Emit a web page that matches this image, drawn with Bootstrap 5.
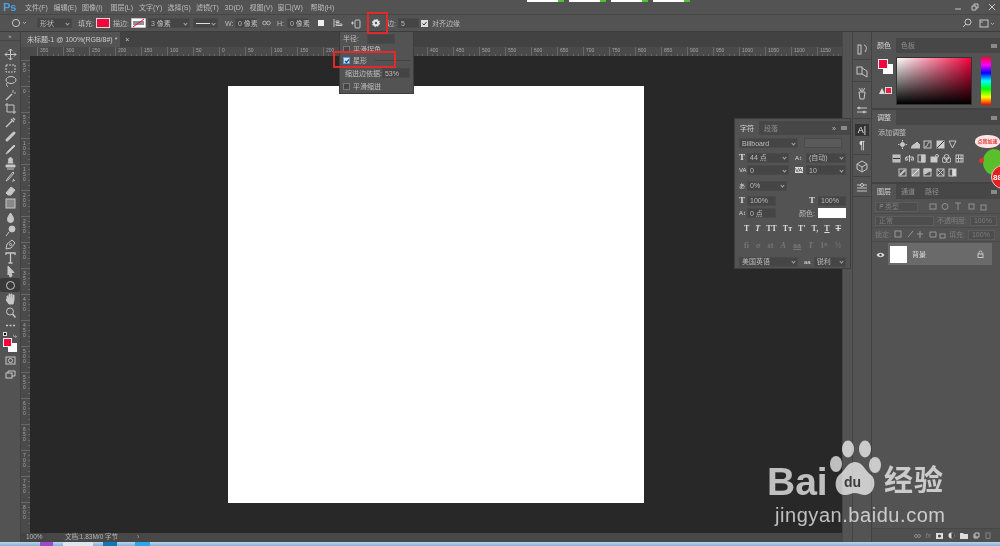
<!DOCTYPE html>
<html lang="zh">
<head>
<meta charset="UTF-8">
<title>Photoshop</title>
<link rel="stylesheet" href="https://cdn.jsdelivr.net/npm/bootstrap@5.3.0/dist/css/bootstrap.min.css">
<style>
  html, body { margin: 0; background: #535353; overflow: hidden; }
  .ps-app { width: 1000px; height: 546px; background: #535353; color: #bdbdbd; font: 7px/1 "Liberation Sans", "Noto Sans CJK SC", sans-serif; filter: blur(.35px); }
  .ps-app svg { display: block; flex: none; }
  .ic { fill: none; stroke: #c6c6c6; stroke-width: 1; }
  .fic { fill: #c6c6c6; }
  .menu-row { flex: 0 0 15px; border-bottom: 1px solid #474747; }
  .ps-logo { flex: 0 0 25px; padding-left: 3px; color: #4d9fe0; font-weight: 700; font-size: 11px; }
  .menu-item { flex: 0 0 28.5px; white-space: nowrap; }
  .menu-3d { flex-basis: 25px; }
  .menu-view { flex-basis: 28px; }
  .menu-win { flex-basis: 33px; }
  .menu-help { flex-basis: 30px; }
  .update-strip { margin-left: 186px; gap: 5px; }
  .update-bit { width: 37px; height: 2px; background: linear-gradient(90deg, #fff 85%, #4cc62e 85%); }
  .win-btns { width: 50px; }
  .opts-row { flex: 0 0 17px; border-bottom: 1px solid #3d3d3d; padding-left: 10px; }
  .opt-box { flex: none; height: 10px; background: #454545; border: 1px solid #4a4a4a; display: flex; align-items: center; padding: 0 2px; white-space: nowrap; }
  .opt-arrow::after { content: ""; margin-left: auto; width: 3px; height: 3px; border-right: 1px solid #aaa; border-bottom: 1px solid #aaa; transform: rotate(45deg); }
  .opt-label { flex: none; white-space: nowrap; }
  .red-swatch { height: 10px; background: #f5033c; border: 1px solid #ddd; flex: none; }
  .line-sample { width: 14px; height: 1px; background: #ddd; }
  .wd-5 { width: 5px; } .wd-6 { width: 6px; } .wd-8 { width: 8px; } .wd-9 { width: 9px; } .wd-14 { width: 14px; } .wd-16 { width: 16px; }
  .wd-21 { width: 21px; } .wd-22 { width: 22px; } .wd-25 { width: 25px; } .wd-27 { width: 27px; } .wd-28 { width: 28px; } .wd-29 { width: 29px; }
  .wd-32 { width: 32px; } .wd-35 { width: 35px; } .wd-37 { width: 37px; } .wd-38 { width: 38px; } .wd-40 { width: 40px; } .wd-42 { width: 42px; }
  .wd-43 { width: 43px; } .wd-59 { width: 59px; } .wd-53 { width: 53px; }
  .gl-2 { margin-left: 2px; } .gl-3 { margin-left: 3px; } .gl-4 { margin-left: 4px; } .gl-5 { margin-left: 5px; } .gl-6 { margin-left: 6px; }
  .gl-7 { margin-left: 7px; } .gl-8 { margin-left: 8px; } .gl-9 { margin-left: 9px; } .gl-10 { margin-left: 10px; }
  .tool-col { width: 21px; border-right: 1px solid #414141; }
  .collapse-mark { height: 9px; border-bottom: 1px solid #454545; color: #bbb; font-size: 6px; }
  .tool-gap { height: 7px; }
  .tool-btn { height: 13.55px; }
  .tool-on { background: #393939; border-radius: 2px; }
  .swatch-area { height: 50px; }
  .mini-default { left: 3px; top: 0; width: 4px; height: 4px; background: #111; border: 1px solid #ddd; }
  .mini-switch { left: 13px; top: 0; color: #ddd; }
  .tool-bg { left: 8px; top: 11px; width: 9px; height: 9px; background: #fff; }
  .tool-fg { left: 3px; top: 6px; width: 9px; height: 9px; background: #f5033c; border: 1px solid #eee; }
  .tool-mask { left: 5px; top: 24px; }
  .tool-screen { left: 5px; top: 38px; }
  .center-col { width: 821px; }
  .tab-bar { flex: 0 0 15px; background: #424242; }
  .doc-tab { width: 99px; background: #535353; padding-left: 6px; color: #ccc; white-space: nowrap; }
  .ruler-x { flex: 0 0 9px; background: #4a4a4a; font-size: 5px; color: #a5a5a5; overflow: hidden; }
  .ruler-x > div { flex: 0 0 26px; height: 9px; padding: 1px 0 0 2px; border-left: 1px solid #686868; background: repeating-linear-gradient(90deg, transparent 0 4.2px, #666 4.2px 5.2px) 0 7px / 100% 2px no-repeat; }
  .ruler-x > .ruler-pad { flex-basis: 16px; border: 0; background: none; }
  .ruler-y { width: 9px; background: #4a4a4a; font-size: 5px; color: #a5a5a5; overflow: hidden; }
  .ruler-y > div { flex: 0 0 26px; width: 9px; padding: 2px 4px 0 2px; border-top: 1px solid #686868; line-height: 5px; word-break: break-all; background: repeating-linear-gradient(180deg, transparent 0 4.2px, #666 4.2px 5.2px) 7px 0 / 2px 100% no-repeat; }
  .ruler-y > .ruler-pad { flex-basis: 4px; border: 0; background: none; padding: 0; }
  .canvas-wrap { background: #282828; }
  .doc-page { width: 416px; height: 417px; background: #fff; }
  .status-row { flex: 0 0 9px; background: #474747; font-size: 6.500px; color: #b5b5b5; white-space: nowrap; }
  .zoom-cell { flex: 0 0 25px; padding-left: 5px; background: #444; height: 100%; display: flex; align-items: center; }
  .doc-size { margin-left: 19px; width: 72px; }
  .dock-gutter { width: 10px; border-left: 1px solid #474747; }
  .icon-strip { width: 20px; border-left: 1px solid #424242; border-right: 1px solid #424242; }
  .strip-top { height: 6px; }
  .strip-group { border-bottom: 1px solid #424242; padding: 5px 0 3px; gap: 5px; }
  .strip-a { width: 14px; height: 12px; background: #333; color: #eee; font-size: 9px; }
  .strip-p { font-size: 10px; color: #ddd; font-weight: 700; }
  .panel-col { width: 128px; }
  .panel-top { height: 6px; }
  .panel-tabs { flex: 0 0 15px; background: #474747; }
  .panel-tab { padding: 0 5px; height: 100%; display: flex; align-items: center; color: #8f8f8f; }
  .panel-tab-on { background: #535353; color: #d6d6d6; }
  .tab-menu { width: 6px; height: 4px; background: #8a8a8a; margin: 0 3px 0 auto; }
  .tab-menu-char { margin: 0 3px 0 5px; }
  .color-body { flex: 0 0 57px; border-bottom: 2px solid #424242; }
  .swatch-fg { left: 6px; top: 6px; width: 10px; height: 10px; background: #f5033c; border: 1px solid #eee; z-index: 1; }
  .swatch-bg { left: 11px; top: 11px; width: 10px; height: 10px; background: #fff; }
  .swatch-web { left: 13px; top: 34px; width: 7px; height: 7px; background: #ef1c43; border: 1px solid #ddd; }
  .warn-tri { left: 7px; top: 35px; width: 0; height: 0; border-left: 3px solid transparent; border-right: 3px solid transparent; border-bottom: 6px solid #ddd; }
  .sv-box { left: 24px; top: 4px; width: 76px; height: 48px; background: linear-gradient(to top, #000, transparent), linear-gradient(to right, #fff, #f5033c); border: 1px solid #333; }
  .hue-box { left: 109px; top: 4px; width: 10px; height: 48px; background: linear-gradient(#f03, #f0f, #00f, #0ff, #0f0, #ff0, #f00); }
  .adj-body { flex: 0 0 59px; border-bottom: 2px solid #424242; padding: 3px 0 0 6px; overflow: hidden; }
  .adj-title { height: 9px; padding-top: 1px; }
  .adj-row { gap: 3.500px; height: 14px; padding-left: 20px; }
  .adj-row2 { padding-left: 14px; }
  .layer-lines { padding-top: 1px; }
  .layer-line { height: 14px; padding: 0 3px; gap: 3px; color: #7e7e7e; white-space: nowrap; border-bottom: 1px solid #4b4b4b; }
  .dim-box { flex: none; height: 10px; background: #4d4d4d; border: 1px solid #5c5c5c; display: flex; align-items: center; padding: 0 3px; }
  .layers-fill { border-bottom: 1px solid #474747; position: relative; padding-top: 1px; }
  .layer-item { height: 22px; margin: 0 8px 0 16px; background: #6a6a6a; color: #ddd; gap: 5px; padding-left: 2px; }
  .layer-thumb { width: 17px; height: 17px; background: #fff; }
  .layer-eye { left: 4px; top: 10px; }
  .layers-foot { flex: 0 0 13px; gap: 5px; padding-right: 9px; background: #4f4f4f; }
  .fx-mark { color: #888; font-style: italic; }
  .task-bar { flex: 0 0 4px; background: linear-gradient(#bcd6ee, #88aed2); padding-left: 40px; }
  .task-chip { height: 4px; }
  .chip-purple { width: 13px; background: #9b4bc9; }
  .chip-white { width: 30px; margin-left: 10px; background: #dfe7ee; }
  .chip-blue { width: 14px; margin-left: 10px; background: #0f78b5; }
  .chip-sky { width: 15px; margin-left: 18px; background: #2aa8e8; }
  .float-panel { left: 734px; top: 118px; width: 117px; height: 151px; background: #535353; border: 1px solid #3e3e3e; z-index: 5; }
  .char-tabs { flex: 0 0 14px; background: #474747; margin-top: 2px; }
  .char-row { flex: 0 0 12.500px; padding: 0 4px; gap: 3px; }
  .char-box { flex: none; height: 10px; background: #454545; border: 1px solid #4a4a4a; display: flex; align-items: center; padding: 0 2px; white-space: nowrap; }
  .box-off { background: #5a5a5a; }
  .box-white { height: 10px; background: #fff; }
  .box-web { background: #444; }
  .glyph-t { font: 700 9px/1 "Liberation Serif", serif; color: #ddd; }
  .glyph-s { font-size: 6px; color: #ddd; white-space: nowrap; }
  .glyph-inv { background: #ddd; color: #333; }
  .style-row { flex: 0 0 14px; padding: 0 9px; font-family: "Liberation Serif", serif; font-weight: 700; font-size: 8px; color: #ddd; }
  .style-dim { color: #777; }
  .row-top2 { margin-top: 2px; }
  .row-top25 { margin-top: 2.500px; }
  .row-top3 { margin-top: 3px; }
  .drop-popup { left: 339px; top: 31px; width: 75px; height: 63px; background: #535353; border: 1px solid #3c3c3c; z-index: 6; padding: 1px 3px; }
  .pop-line { flex: 0 0 11px; gap: 3px; white-space: nowrap; }
  .pop-line-mid { flex-basis: 14px; gap: 0; padding-left: 2px; }
  .pop-line-tall { flex-basis: 13px; }
  .pop-check { flex: none; width: 7px; height: 7px; background: #454545; border: 1px solid #777; }
  .pop-on { background: #cfe1f5; border-color: #5b9ddb; }
  .pop-rule { height: 1px; background: #444; }
  .red-frame { border: 2px solid #e32a2a; z-index: 8; }
  .frame-gear { left: 367px; top: 12px; width: 21px; height: 22px; }
  .frame-star { left: 333px; top: 51px; width: 63px; height: 17px; }
  .promo { left: 972px; top: 134px; width: 28px; height: 58px; z-index: 7; overflow: hidden; }
  .promo-bubble { left: 3px; top: 1px; width: 25px; height: 13px; background: #fde6e6; color: #e23a3a; border-radius: 45%; font-size: 5px; font-weight: 700; white-space: nowrap; }
  .promo-blob { left: 11px; top: 15px; width: 22px; height: 26px; background: #59c02b; border-radius: 50%; }
  .promo-dot { left: 7px; top: 24px; width: 5px; height: 5px; background: #e53232; border-radius: 50%; }
  .promo-badge { left: 19px; top: 31px; width: 24px; height: 24px; background: #e2201f; border: 1px solid #f3c9c9; border-radius: 50%; color: #fff; font-size: 8px; font-weight: 700; padding: 8px 0 0 1px; }
  .mark-wrap { left: 760px; top: 438px; width: 200px; height: 90px; z-index: 9; color: rgba(255,255,255,.7); pointer-events: none; }
  .mark-bai { left: 7px; top: 24px; font: 700 39px/1 "Liberation Sans", sans-serif; }
  .mark-paw { left: 68px; top: 2px; }
  .mark-paw g { fill: rgba(255,255,255,.7); }
  .mark-cn { left: 124px; top: 26px; font: 700 29px/1 "Noto Sans CJK SC", sans-serif; letter-spacing: 1px; white-space: nowrap; }
  .mark-url { left: 15px; top: 67px; font: 400 20px/1 "Liberation Sans", sans-serif; letter-spacing: .55px; white-space: nowrap; }
  .mark-du { font: 700 14px/1 "Liberation Sans", sans-serif; fill: #3c3c3c; }
</style>
</head>
<body>
<div class="ps-app d-flex flex-column position-relative overflow-hidden">

  <div class="menu-row d-flex align-items-center">
    <div class="ps-logo">Ps</div>
    <div class="menu-item">文件(F)</div><div class="menu-item">编辑(E)</div><div class="menu-item">图像(I)</div><div class="menu-item">图层(L)</div><div class="menu-item">文字(Y)</div><div class="menu-item">选择(S)</div><div class="menu-item">滤镜(T)</div><div class="menu-item menu-3d">3D(D)</div><div class="menu-item menu-view">视图(V)</div><div class="menu-item menu-win">窗口(W)</div><div class="menu-item menu-help">帮助(H)</div>
    <div class="update-strip d-flex align-self-start">
      <div class="update-bit"></div><div class="update-bit"></div><div class="update-bit"></div><div class="update-bit"></div>
    </div>
    <div class="win-btns d-flex align-items-center justify-content-around ms-auto">
      <svg width="8" height="8" class="ic"><path d="M1 6h6"/></svg>
      <svg width="8" height="8" class="ic"><path d="M1 3h4v4H1zM3 3V1h4v4H5"/></svg>
      <svg width="8" height="8" class="ic"><path d="M1 1l6 6M7 1L1 7"/></svg>
    </div>
  </div>

  <div class="opts-row d-flex align-items-center">
    <svg width="17" height="10" class="ic"><circle cx="6" cy="5" r="3.600"/><path d="M13 4l1.500 1.500L16 4" stroke-width=".8"/></svg>
    <div class="opt-box opt-arrow wd-35 gl-10">形状</div>
    <span class="opt-label wd-16 gl-6">填充:</span>
    <div class="red-swatch wd-14 gl-2"></div>
    <span class="opt-label wd-16 gl-3">描边:</span>
    <svg width="15" height="10" class="gl-2"><rect width="15" height="10" fill="#fff" stroke="#888"/><path d="M2 6h11M2 4h11" stroke="#222"/><path d="M2 9L13 1" stroke="#f5033c"/></svg>
    <div class="opt-box opt-arrow wd-42 gl-2">3 像素</div>
    <div class="opt-box opt-arrow wd-25 gl-3"><span class="line-sample"></span></div>
    <span class="opt-label wd-8 gl-7">W:</span>
    <div class="opt-box wd-22 gl-2">0 像素</div>
    <svg class="ic gl-5" width="9" height="6"><circle cx="2.500" cy="3" r="1.800" stroke-width=".8"/><circle cx="6.500" cy="3" r="1.800" stroke-width=".8"/></svg>
    <span class="opt-label wd-8 gl-6">H:</span>
    <div class="opt-box wd-21 gl-2">0 像素</div>
    <svg width="10" height="10" class="gl-8"><rect x="2" y="2" width="6" height="6" fill="#eee"/></svg>
    <svg width="10" height="10" class="ic gl-7"><path d="M1 1v8M3 3h3v1.500H3zM3 6h6v1.500H3z"/></svg>
    <svg width="12" height="11" class="ic gl-7"><path d="M1 5h3M2.500 3.500v3"/><rect x="5" y="2" width="5" height="8" rx="1"/></svg>
    <svg width="10" height="10" viewBox="0 0 10 10" class="gl-9"><circle cx="5" cy="5" r="3.200" fill="#e4e4e4" stroke="#e4e4e4" stroke-dasharray="1.500 1" stroke-width="1.500"/><circle cx="5" cy="5" r="1.200" fill="#535353"/></svg>
    <span class="opt-label wd-9 gl-6">边:</span>
    <div class="opt-box wd-21 gl-2">5</div>
    <svg width="7" height="7" class="gl-2"><rect width="7" height="7" fill="#ddd"/><path d="M1.500 3.500l1.500 1.500 2.500-3" fill="none" stroke="#333"/></svg>
    <span class="opt-label gl-4">对齐边缘</span>
    <svg width="10" height="10" class="ic ms-auto"><circle cx="6" cy="4" r="3"/><path d="M4 6L1 9"/></svg>
    <svg width="17" height="10" class="ic gl-7 me-1"><rect x="1" y="2" width="8" height="7"/><path d="M1 4h3M12 5l1.500 1.500L15 5" stroke-width=".8"/></svg>
  </div>

  <div class="d-flex flex-grow-1 overflow-hidden">
    <div class="tool-col d-flex flex-column align-items-stretch">
      <div class="collapse-mark d-flex align-items-center justify-content-center">»</div>
      <div class="tool-gap"></div>
      <div id="toolList" class="d-flex flex-column"></div>
      <div class="swatch-area position-relative">
        <div class="mini-default position-absolute"></div>
        <div class="mini-switch position-absolute">⤷</div>
        <div class="tool-bg position-absolute"></div>
        <div class="tool-fg position-absolute"></div>
        <svg class="ic tool-mask position-absolute" width="11" height="9"><rect x="1" y="1" width="9" height="7"/><circle cx="5.500" cy="4.500" r="2"/></svg>
        <svg class="ic tool-screen position-absolute" width="11" height="9"><rect x="1" y="3" width="6" height="5"/><path d="M3 3V1h7v5H7"/></svg>
      </div>
    </div>

    <div class="center-col d-flex flex-column flex-grow-1">
      <div class="tab-bar d-flex">
        <div class="doc-tab d-flex align-items-center">未标题-1 @ 100%(RGB/8#) *<span class="ms-2">×</span></div>
      </div>
      <div id="rulerX" class="ruler-x d-flex"><div class="ruler-pad"></div></div>
      <div class="d-flex flex-grow-1 overflow-hidden">
        <div id="rulerY" class="ruler-y d-flex flex-column"><div class="ruler-pad"></div></div>
        <div class="canvas-wrap flex-grow-1 d-flex align-items-center justify-content-center">
          <div class="doc-page"></div>
        </div>
      </div>
      <div class="status-row d-flex align-items-center">
        <div class="zoom-cell">100%</div>
        <div class="doc-size">文档:1.83M/0 字节</div>
        <div>›</div>
      </div>
    </div>

    <div class="dock-gutter"></div>
    <div class="icon-strip d-flex flex-column">
      <div class="strip-top"></div>
      <div class="strip-group d-flex flex-column align-items-center">
        <svg width="12" height="13" class="ic"><rect x="2" y="2" width="3" height="9"/><path d="M8 2c3 1 3 4 1 7"/></svg>
      </div>
      <div class="strip-group d-flex flex-column align-items-center">
        <svg width="12" height="13" class="ic"><rect x="1" y="2" width="5" height="7"/><path d="M6 3l5 3v6l-5-3"/></svg>
      </div>
      <div class="strip-group d-flex flex-column align-items-center">
        <svg width="12" height="13" class="ic"><path d="M3 5h6l-1 7H4zM6 1v4M3 1l2 3M9 1L7 4"/></svg>
        <svg width="12" height="10" class="ic"><path d="M1 3h10M1 7h10"/><circle cx="3" cy="3" r="1"/><circle cx="8" cy="7" r="1"/></svg>
      </div>
      <div class="strip-group d-flex flex-column align-items-center">
        <div class="strip-a d-flex align-items-center justify-content-center">A|</div>
        <div class="strip-p">¶</div>
      </div>
      <div class="strip-group d-flex flex-column align-items-center">
        <svg width="12" height="13" class="ic"><path d="M6 1l5 3v5l-5 3-5-3V4zM1 4l5 3 5-3M6 7v5"/></svg>
      </div>
      <div class="strip-group d-flex flex-column align-items-center">
        <svg width="12" height="11" class="ic"><path d="M1 3h4M7 3h4M1 6h10M1 9h10"/><circle cx="6" cy="3" r="1.500"/></svg>
      </div>
    </div>

    <div class="panel-col d-flex flex-column">
      <div class="panel-top"></div>
      <div class="panel-tabs d-flex align-items-center">
        <div class="panel-tab panel-tab-on">颜色</div><div class="panel-tab">色板</div><div class="tab-menu"></div>
      </div>
      <div class="color-body position-relative">
        <div class="swatch-fg position-absolute"></div><div class="swatch-bg position-absolute"></div>
        <div class="warn-tri position-absolute"></div><div class="swatch-web position-absolute"></div>
        <div class="sv-box position-absolute"></div><div class="hue-box position-absolute"></div>
      </div>
      <div class="panel-tabs d-flex align-items-center">
        <div class="panel-tab panel-tab-on">调整</div><div class="tab-menu"></div>
      </div>
      <div class="adj-body">
        <div class="adj-title">添加调整</div>
        <div id="adjRow1" class="adj-row d-flex align-items-center"></div>
        <div id="adjRow2" class="adj-row adj-row2 d-flex align-items-center"></div>
        <div id="adjRow3" class="adj-row d-flex align-items-center"></div>
      </div>
      <div class="panel-tabs d-flex align-items-center">
        <div class="panel-tab panel-tab-on">图层</div><div class="panel-tab">通道</div><div class="panel-tab">路径</div><div class="tab-menu"></div>
      </div>
      <div class="layer-lines">
        <div class="layer-line d-flex align-items-center">
          <div class="dim-box wd-43">ᑭ 类型</div>
          <svg width="60" height="9" class="ic gl-8" opacity=".55"><rect x="1" y="2" width="6" height="5"/><circle cx="16" cy="4.500" r="3"/><path d="M26 1h6M29 1v7"/><rect x="40" y="2" width="5" height="5"/><rect x="52" y="3" width="5" height="5"/></svg>
        </div>
        <div class="layer-line d-flex align-items-center">
          <div class="dim-box wd-59">正常</div>
          <span>不透明度:</span><div class="dim-box wd-27">100%</div>
        </div>
        <div class="layer-line d-flex align-items-center">
          <span class="wd-16">锁定:</span>
          <svg width="52" height="9" class="ic" opacity=".6"><rect x="1" y="1" width="6" height="6"/><path d="M14 7l5-6M26 1v7M23 4h6M36 2h6v5h-6z"/><rect x="46" y="4" width="5" height="4"/></svg>
          <span>填充:</span><div class="dim-box wd-27">100%</div>
        </div>
      </div>
      <div class="layers-fill flex-grow-1">
        <svg class="layer-eye position-absolute" width="9" height="6" viewBox="0 0 9 6"><path d="M.5 3C3 0 6 0 8.500 3 6 6 3 6 .5 3z" fill="#ddd"/><circle cx="4.500" cy="3" r="1.200" fill="#444"/></svg>
        <div class="layer-item d-flex align-items-center">
          <div class="layer-thumb"></div><span>背景</span>
          <svg width="7" height="8" class="ic ms-auto me-2"><path d="M2 4V2.500a1.500 1.500 0 0 1 3 0V4"/><rect x="1" y="4" width="5" height="3.500"/></svg>
        </div>
      </div>
      <div class="layers-foot d-flex align-items-center justify-content-end">
        <svg width="7" height="6" class="ic" opacity=".5"><circle cx="2" cy="3" r="1.500"/><circle cx="5" cy="3" r="1.500"/></svg>
        <span class="fx-mark">fx</span>
        <svg width="7" height="6"><rect width="7" height="6" fill="#ddd"/><circle cx="3.500" cy="3" r="1.500" fill="#444"/></svg>
        <svg width="7" height="7"><circle cx="3.500" cy="3.500" r="3" fill="#ddd"/><path d="M3.500.5a3 3 0 0 1 0 6z" fill="#444"/></svg>
        <svg width="8" height="6"><path d="M0 0h3l1 1h4v5H0z" fill="#ddd"/></svg>
        <svg width="7" height="7" class="ic"><path d="M2 1h4v4H2zM1 2v4h4"/></svg>
        <svg width="6" height="7" class="ic" opacity=".45"><path d="M0 1h6M1 2v4.500h4V2"/></svg>
      </div>
    </div>
  </div>

  <div class="task-bar d-flex">
    <div class="task-chip chip-purple"></div>
    <div class="task-chip chip-white"></div>
    <div class="task-chip chip-blue"></div>
    <div class="task-chip chip-sky"></div>
  </div>

  <!-- floating stuff over the canvas -->
  <div class="float-panel position-absolute d-flex flex-column">
    <div class="char-tabs d-flex align-items-center">
      <div class="panel-tab panel-tab-on">字符</div><div class="panel-tab">段落</div>
      <span class="ms-auto">»</span><div class="tab-menu tab-menu-char"></div>
    </div>
    <div class="char-row row-top2 d-flex align-items-center">
      <div class="char-box opt-arrow wd-59">Billboard</div>
      <div class="char-box box-off wd-38 gl-3"></div>
    </div>
    <div class="char-row row-top2 d-flex align-items-center">
      <span class="glyph-t wd-5">T</span><div class="char-box opt-arrow wd-42">44 点</div>
      <span class="glyph-s wd-9 gl-3">A↕</span><div class="char-box opt-arrow wd-40">(自动)</div>
    </div>
    <div class="char-row d-flex align-items-center">
      <span class="glyph-s wd-5">VA</span><div class="char-box opt-arrow wd-42">0</div>
      <span class="glyph-s glyph-inv wd-9 gl-3">VA</span><div class="char-box opt-arrow wd-40">10</div>
    </div>
    <div class="char-row row-top3 d-flex align-items-center">
      <span class="glyph-s wd-5">あ</span><div class="char-box opt-arrow wd-40">0%</div>
    </div>
    <div class="char-row row-top25 d-flex align-items-center">
      <span class="glyph-t wd-5">T</span><div class="char-box wd-29">100%</div>
      <span class="glyph-t ms-auto">T</span><div class="char-box wd-28">100%</div>
    </div>
    <div class="char-row d-flex align-items-center">
      <span class="glyph-s wd-5">A↕</span><div class="char-box wd-29">0 点</div>
      <span class="ms-auto">颜色:</span><div class="box-white wd-28"></div>
    </div>
    <div class="style-row row-top2 d-flex justify-content-between align-items-center">
      <span>T</span><span><i>T</i></span><span>TT</span><span>Tт</span><span>T'</span><span>T,</span><span><u>T</u></span><span><s>T</s></span>
    </div>
    <div class="style-row style-dim row-top3 d-flex justify-content-between align-items-center">
      <span>fi</span><span><i>σ</i></span><span>st</span><span><i>A</i></span><span><u>aa</u></span><span><i>T</i></span><span>1ˢᵗ</span><span>½</span>
    </div>
    <div class="char-row d-flex align-items-center mt-auto">
      <div class="char-box opt-arrow wd-59">美国英语</div>
      <span class="glyph-s gl-3">aa</span>
      <div class="char-box opt-arrow wd-32">锐利</div>
    </div>
  </div>

  <div class="drop-popup position-absolute d-flex flex-column">
    <div class="pop-line d-flex align-items-center">半径:<div class="char-box wd-28 gl-5"></div></div>
    <div class="pop-line d-flex align-items-center"><div class="pop-check"></div><span>平滑拐角</span></div>
    <div class="pop-line d-flex align-items-center">
      <svg width="7" height="7" class="pop-check pop-on"><path d="M1 3l1.500 1.500L5 1.500" fill="none" stroke="#1d4f82" stroke-width="1.200"/></svg>
      <span>星形</span><div class="pop-rule flex-grow-1 gl-5"></div>
    </div>
    <div class="pop-line pop-line-mid d-flex align-items-center">缩进边依据:<div class="char-box box-web wd-28">53%</div></div>
    <div class="pop-line pop-line-tall d-flex align-items-center"><div class="pop-check"></div><span>平滑缩进</span></div>
  </div>

  <div class="red-frame frame-gear position-absolute"></div>
  <div class="red-frame frame-star position-absolute"></div>

  <div class="promo position-absolute">
    <div class="promo-bubble position-absolute d-flex align-items-center justify-content-center">点我加速</div>
    <div class="promo-blob position-absolute"></div>
    <div class="promo-dot position-absolute"></div>
    <div class="promo-badge position-absolute">88</div>
  </div>

  <div class="mark-wrap position-absolute">
    <div class="mark-bai position-absolute">Bai</div>
    <svg class="mark-paw position-absolute" width="54" height="60" viewBox="0 0 54 60">
      <g>
        <ellipse cx="8" cy="24" rx="6" ry="8"/>
        <ellipse cx="20" cy="9" rx="6" ry="8.500"/>
        <ellipse cx="37" cy="9" rx="6" ry="8.500"/>
        <ellipse cx="47" cy="25" rx="6" ry="8"/>
        <path d="M27 22c8 0 10 9 16 13 6 5 4 19-6 20-4 0-7-2-10-2s-6 2-10 2C7 55 5 41 11 35c6-4 8-13 16-13z"/>
      </g>
      <text x="16" y="47" class="mark-du">du</text>
    </svg>
    <div class="mark-cn position-absolute">经验</div>
    <div class="mark-url position-absolute">jingyan.baidu.com</div>
  </div>
</div>
<script src="https://cdn.jsdelivr.net/npm/bootstrap@5.3.0/dist/js/bootstrap.bundle.min.js"></script>
<script>
// rulers
var rx = document.getElementById("rulerX");
for (var k = -7; k <= 23; k++) {
  var c = document.createElement("div");
  c.textContent = Math.abs(k) * 50;
  rx.appendChild(c);
}
var ry = document.getElementById("rulerY");
for (var j = -1; j <= 16; j++) {
  var r = document.createElement("div");
  r.textContent = Math.abs(j) * 50;
  ry.appendChild(r);
}

// toolbar icons, rough shapes
var toolPaths = [
  '<path d="M6.500 1v11M1 6.500h11M6.500 1l-2 2M6.500 1l2 2M6.500 12l-2-2M6.500 12l2-2M1 6.500l2-2M1 6.500l2 2M12 6.500l-2-2M12 6.500l-2 2"/>',
  '<rect x="2" y="3" width="9" height="7" stroke-dasharray="2 1"/>',
  '<ellipse cx="7" cy="5" rx="5" ry="3.500"/><path d="M3 8c-1 2 0 3 1 4"/>',
  '<path d="M2 11l6-6" stroke-width="1.500"/><path d="M9 1v3M10 4h2" stroke-width=".8"/>',
  '<path d="M3 1v9h9M1 3h9v9"/>',
  '<path d="M2 11l6-6M7 3l3 3M9 2l2 2" stroke-width="1.400"/>',
  '<path d="M3 10l7-7" stroke-width="3" stroke-linecap="round"/>',
  '<path class="fic" d="M2 11l2-3 6-6 1 1-6 6z"/>',
  '<path class="fic" d="M4 6h5l-1-2a2 2 0 1 0-3 0zM2 8h9v2H2zM3 12h7"/>',
  '<path d="M2 11l2-3 5-6 1 1-5 6zM9 9l2 2M8 11l2 0"/>',
  '<path class="fic" d="M2 9l5-6 4 3-4 5H4z"/>',
  '<rect x="2" y="2" width="9" height="9" fill="#888"/>',
  '<path class="fic" d="M6.500 2C4 5.500 3.500 7 3.500 8.500a3 3 0 0 0 6 0c0-1.500-.5-3-3-6.500z"/>',
  '<circle class="fic" cx="8" cy="5" r="3"/><path d="M5 8l-3 4"/>',
  '<path d="M2 11l1-5 5-4 3 3-4 5z"/><circle cx="6.500" cy="6.500" r="1"/>',
  '<path d="M2 4V2h9v2M6.500 2v10M4.500 12h4" stroke-width="1.300"/>',
  '<path class="fic" d="M4 1l6 6.500H7L8 11l-2 1-1-4-1 2z"/>',
  '<circle cx="6.500" cy="6.500" r="4"/>',
  '<path class="fic" d="M3 7V4h1v2h1V2h1v4h1V2h1v4h1V3h1v5l-1 4H5L2 8z"/>',
  '<circle cx="6" cy="5.500" r="3.500"/><path d="M8.500 8l3 3.500" stroke-width="1.500"/>',
  '<path d="M2 6.500h2M5.500 6.500h2M9 6.500h2" stroke-width="1.500"/>'
];
var list = document.getElementById("toolList");
toolPaths.forEach(function (p, i) {
  var d = document.createElement("div");
  d.className = "tool-btn d-flex align-items-center justify-content-center" + (i === 17 ? " tool-on" : "");
  d.innerHTML = '<svg width="13" height="13" class="ic">' + p + "</svg>";
  list.appendChild(d);
});

// adjustment icons
function addAdj(id, shapes) {
  var row = document.getElementById(id);
  shapes.forEach(function (s) {
    row.insertAdjacentHTML("beforeend", '<svg width="9" height="9" class="ic">' + s + "</svg>");
  });
}
addAdj("adjRow1", [
  '<circle class="fic" cx="4.500" cy="4.500" r="2"/><path d="M4.500 0v1.500M4.500 7.500V9M0 4.500h1.500M7.500 4.500H9"/>',
  '<path class="fic" d="M0 8l2-3 2-1 2-2 3 3v3z"/>',
  '<rect x="1" y="1" width="7" height="7"/><path d="M2 7c3 0 2-5 5-5"/>',
  '<rect x=".5" y=".5" width="8" height="8" fill="#ccc" stroke="none"/><path d="M1 8L8 1" stroke="#333"/>',
  '<path d="M1 1h7L4.500 8z"/>'
]);
addAdj("adjRow2", [
  '<rect x="1" y="1" width="7" height="7" fill="#bbb"/><path d="M1 4.500h7" stroke="#333"/>',
  '<path d="M4.500 1v7M1 3h7M1 3l-1 3h3zM8 3L6 6h3z"/>',
  '<rect x="1" y="1" width="7" height="7"/><path class="fic" d="M4.500 1h3.500v7H4.500z"/>',
  '<rect x="1" y="3" width="6" height="5" fill="#ccc"/><circle cx="7" cy="2" r="1.500"/>',
  '<circle cx="4.500" cy="3" r="2.500"/><circle cx="2.500" cy="6" r="2.500"/><circle cx="6.500" cy="6" r="2.500"/>',
  '<rect x="1" y="1" width="7" height="7"/><path d="M3.500 1v7M6 1v7M1 4.500h7"/>'
]);
addAdj("adjRow3", [
  '<rect x="1" y="1" width="7" height="7"/><path d="M2 7l5-5" stroke-width="2"/>',
  '<rect x="1" y="1" width="7" height="7" fill="#999"/><path d="M1 8L8 1" stroke="#eee"/>',
  '<rect x="1" y="1" width="7" height="7"/><path class="fic" d="M1 6c3 0 4-3 7-3V1H1z"/>',
  '<rect x="1" y="1" width="7" height="7"/><path d="M1 1l7 7M8 1L1 8"/>',
  '<rect x="1" y="1" width="3.500" height="7" fill="#555"/><rect x="4.500" y="1" width="3.500" height="7" fill="#ddd"/>'
]);
</script>
</body>
</html>
